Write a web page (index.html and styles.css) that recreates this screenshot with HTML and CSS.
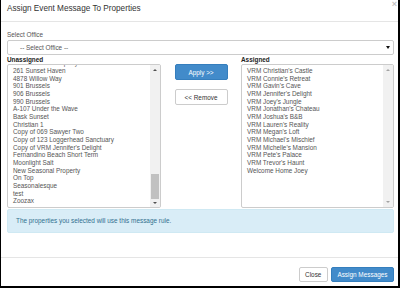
FILE: index.html
```html
<!DOCTYPE html>
<html lang="en">
<head>
<meta charset="utf-8">
<title>Assign Event Message To Properties</title>
<link rel="stylesheet" href="styles.css">
</head>
<body>
<div class="modal">
    <div class="modal-header">
        <h4 class="modal-title">Assign Event Message To Properties</h4>
        <button class="close" aria-label="close">&times;</button>
    </div>

    <div class="modal-body">
        <label class="field-label">Select Office</label>
        <div class="select">-- Select Office --<span class="caret"></span></div>

        <div class="columns">
            <div class="col">
                <div class="col-label">Unassigned</div>
                <div class="listbox">
                    <div class="items scrolled">
                        <div>102 Seasonal Property</div>
                        <div>261 Sunset Haven</div>
                        <div>4878 Willow Way</div>
                        <div>901 Brussels</div>
                        <div>906 Brussels</div>
                        <div>990 Brussels</div>
                        <div>A-107 Under the Wave</div>
                        <div>Bask Sunset</div>
                        <div>Christian 1</div>
                        <div>Copy of 069 Sawyer Two</div>
                        <div>Copy of 123 Loggerhead Sanctuary</div>
                        <div>Copy of VRM Jennifer's Delight</div>
                        <div>Fernandino Beach Short Term</div>
                        <div>Moonlight Salt</div>
                        <div>New Seasonal Property</div>
                        <div>On Top</div>
                        <div>Seasonalesque</div>
                        <div>test</div>
                        <div>Zoozax</div>
                    </div>
                    <div class="scrollbar">
                        <span class="arrow up"></span>
                        <div class="track"><div class="thumb"></div></div>
                        <span class="arrow down"></span>
                    </div>
                </div>
            </div>

            <div class="actions">
                <button class="btn btn-primary">Apply &gt;&gt;</button>
                <button class="btn btn-default">&lt;&lt; Remove</button>
            </div>

            <div class="col">
                <div class="col-label">Assigned</div>
                <div class="listbox">
                    <div class="items">
                        <div>VRM Christian's Castle</div>
                        <div>VRM Connie's Retreat</div>
                        <div>VRM Gavin's Cave</div>
                        <div>VRM Jennifer's Delight</div>
                        <div>VRM Joey's Jungle</div>
                        <div>VRM Jonathan's Chateau</div>
                        <div>VRM Joshua's B&amp;B</div>
                        <div>VRM Lauren's Reality</div>
                        <div>VRM Megan's Loft</div>
                        <div>VRM Michael's Mischief</div>
                        <div>VRM Michelle's Mansion</div>
                        <div>VRM Pete's Palace</div>
                        <div>VRM Trevor's Haunt</div>
                        <div>Welcome Home Joey</div>
                    </div>
                    <div class="scrollbar disabled">
                        <span class="arrow up"></span>
                        <div class="track"></div>
                        <span class="arrow down"></span>
                    </div>
                </div>
            </div>
        </div>

        <div class="alert">The properties you selected will use this message rule.</div>
    </div>

    <div class="modal-footer">
        <button class="btn btn-default">Close</button>
        <button class="btn btn-primary">Assign Messages</button>
    </div>
</div>
</body>
</html>
```

FILE: styles.css
```css
* {
    box-sizing: border-box;
}

body {
    margin: 0;
    font-family: "Liberation Sans", Arial, sans-serif;
    font-size: 6.4px;
    color: #333;
    background: #fff;
}

.modal {
    position: relative;
    width: 400px;
    height: 288px;
    border-left: 1px solid #000;
    border-right: 2px solid #000;
    border-bottom: 2px solid #000;
    background: #fff;
}

.modal-header {
    height: 22px;
    padding: 2.5px 7px 0 6px;
    border-bottom: 1px solid #e5e5e5;
}

.modal-title {
    margin: 0;
    font-size: 8.2px;
    font-weight: normal;
    line-height: 12px;
    color: #333;
}

.close {
    position: absolute;
    top: 0;
    right: 1px;
    padding: 0;
    border: 0;
    background: none;
    font-family: "Liberation Sans", Arial, sans-serif;
    font-size: 9px;
    font-weight: bold;
    line-height: 9px;
    color: #000;
    opacity: 0.25;
}

.modal-body {
    padding: 8px 4px 24px 6px;
}

.field-label {
    display: block;
    line-height: 9px;
    margin-bottom: 1px;
    color: #555;
}

.select {
    position: relative;
    height: 15px;
    padding-left: 12px;
    border: 1px solid #ccc;
    border-radius: 2px;
    line-height: 13px;
    color: #555;
}

.caret {
    position: absolute;
    right: 3px;
    top: 5px;
    border-left: 2px solid transparent;
    border-right: 2px solid transparent;
    border-top: 3.5px solid #111;
}

.columns {
    display: grid;
    grid-template-columns: 154px 1fr 153px;
    margin-top: 1px;
}

.col-label {
    font-weight: bold;
    line-height: 8px;
    color: #222;
}

.listbox {
    display: flex;
    height: 144px;
    border: 1px solid #ccc;
    border-radius: 2px;
    overflow: hidden;
}

.items {
    flex: 1;
    padding: 2px 0 0 5px;
    line-height: 7.65px;
    color: #555;
    white-space: nowrap;
    overflow: hidden;
}

.items.scrolled > div:first-child {
    margin-top: -7.65px;
}

.scrollbar {
    display: flex;
    flex-direction: column;
    align-items: center;
    width: 10px;
    background: #f1f1f1;
}

.scrollbar .track {
    flex: 1;
    width: 100%;
    padding: 100px 1px 0;
}

.thumb {
    height: 25px;
    background: #c1c1c1;
}

.arrow {
    height: 10px;
    width: 0;
    border-left: 2px solid transparent;
    border-right: 2px solid transparent;
}

.arrow.up {
    margin-top: 4px;
    height: 0;
    border-bottom: 2.5px solid #505050;
    margin-bottom: 3px;
}

.arrow.down {
    height: 0;
    border-top: 2.5px solid #505050;
    margin-bottom: 4px;
    margin-top: 3px;
}

.scrollbar.disabled .arrow.up {
    border-bottom-color: #a3a3a3;
}

.scrollbar.disabled .arrow.down {
    border-top-color: #a3a3a3;
}

.actions {
    display: flex;
    flex-direction: column;
    align-items: center;
    gap: 9px;
    padding-top: 8px;
}

.actions .btn {
    width: 53px;
    height: 16px;
}

.btn {
    height: 15px;
    padding: 0 5.5px;
    border: 1px solid #ccc;
    border-radius: 2px;
    font-family: "Liberation Sans", Arial, sans-serif;
    font-size: 6.4px;
    line-height: 13px;
    background: #fff;
    color: #333;
}

.btn-primary {
    background: #428bca;
    border-color: #357ebd;
    color: #fff;
}

.alert {
    margin-top: 1px;
    height: 24px;
    padding: 6px 8px 0;
    border: 1px solid #cfe9f3;
    border-radius: 2px;
    background: #d9edf7;
    color: #31708f;
    line-height: 9px;
}

.modal-footer {
    display: flex;
    justify-content: flex-end;
    gap: 3px;
    padding: 9px 4px 0 0;
    border-top: 1px solid #e5e5e5;
}
```
